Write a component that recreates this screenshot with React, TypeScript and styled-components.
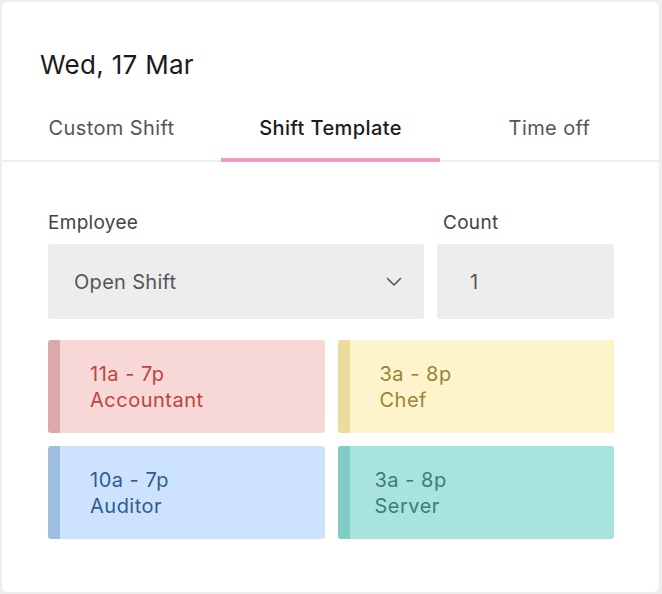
import React from 'react';
import styled, { createGlobalStyle } from 'styled-components';

const GlobalStyle = createGlobalStyle`
    html, body {
        margin: 0;
        padding: 0;
        background: #eeeeee;
    }
    body {
        font-family: Inter, "Noto Sans", "Liberation Sans", sans-serif;
    }
`;

/** ____________________________________________________    FRAME
 * */
const Panel = styled.div`
    box-sizing: border-box;
    margin: 2px 3px 0 2px;
    height: 590px;
    background: #ffffff;
    border-radius: 5px;
`;

const Title = styled.h1`
    margin: 0;
    padding: 47px 0 0 38px;
    font-size: 26px;
    line-height: 32px;
    font-weight: 400;
    letter-spacing: 0.3px;
    color: #1a1a1a;
`;

/** ____________________________________________________    TABS
 * */
const Tabs = styled.div`
    display: grid;
    grid-template-columns: repeat(3, 1fr);
    margin-top: 35px;
    border-bottom: 2px solid #eeeeee;
`;

const Tab = styled.div<{ $active?: boolean }>`
    text-align: center;
    font-size: 20px;
    line-height: 24px;
    letter-spacing: 0.4px;
    padding-bottom: 18px;
    margin-bottom: -2px;
    color: ${p => (p.$active ? '#1c1c1c' : '#555555')};
    font-weight: ${p => (p.$active ? 500 : 400)};
    border-bottom: 4px solid ${p => (p.$active ? '#f29ac4' : 'transparent')};
`;

/** ____________________________________________________    FORM
 * */
const Body = styled.div`
    padding: 49px 45px 0 46px;
`;

const FieldRow = styled.div`
    display: grid;
    grid-template-columns: 376px 1fr;
    column-gap: 13px;
`;

const Field = styled.div`
    display: flex;
    flex-direction: column;
    gap: 9px;
`;

const Label = styled.label<{ $indent?: number }>`
    padding-left: ${p => p.$indent ?? 0}px;
    font-size: 19px;
    line-height: 24px;
    letter-spacing: 0.3px;
    color: #444444;
`;

const InputBox = styled.div<{ $inset: number }>`
    display: flex;
    align-items: center;
    justify-content: space-between;
    height: 75px;
    box-sizing: border-box;
    padding: 0 22px 0 ${p => p.$inset}px;
    background: #ededed;
    border-radius: 3px;
    font-size: 20px;
    letter-spacing: 0.3px;
    color: #555555;
`;

/** ____________________________________________________    SHIFT TEMPLATES
 * */
const Templates = styled.div`
    display: grid;
    grid-template-columns: 1fr 1fr;
    gap: 13px;
    margin-top: 21px;
`;

type Tone = { bg: string; stripe: string; text: string };

const Card = styled.div<{ $tone: Tone; $inset: number }>`
    display: flex;
    flex-direction: column;
    justify-content: center;
    height: 93px;
    box-sizing: border-box;
    padding-left: ${p => p.$inset}px;
    background: ${p => p.$tone.bg};
    border-left: 12px solid ${p => p.$tone.stripe};
    border-radius: 3px;
    color: ${p => p.$tone.text};
    font-size: 20px;
    line-height: 26px;
    letter-spacing: 0.5px;
`;

const tones: Record<string, Tone> = {
    red: { bg: '#f8d7d7', stripe: '#dcaaa9', text: '#c0423f' },
    yellow: { bg: '#fef4cb', stripe: '#ecdb9f', text: '#9a8434' },
    blue: { bg: '#cde3fd', stripe: '#a0bde2', text: '#2f5b93' },
    teal: { bg: '#a8e3de', stripe: '#80cdc6', text: '#3a7e78' },
};

const shifts = [
    { time: '11a - 7p', role: 'Accountant', tone: tones.red, inset: 30 },
    { time: '3a - 8p', role: 'Chef', tone: tones.yellow, inset: 30 },
    { time: '10a - 7p', role: 'Auditor', tone: tones.blue, inset: 30 },
    { time: '3a - 8p', role: 'Server', tone: tones.teal, inset: 25 },
];

const Chevron = () => (
    <svg width="16" height="10" viewBox="0 0 16 10" fill="none">
        <path d="M1.5 1.5 L8 8 L14.5 1.5" stroke="#555" strokeWidth="1.6" strokeLinecap="round" strokeLinejoin="round"/>
    </svg>
);

export default function App() {
    return (
        <>
            <GlobalStyle/>
            <Panel>
                <Title>Wed, 17 Mar</Title>

                <Tabs>
                    <Tab>Custom Shift</Tab>
                    <Tab $active>Shift Template</Tab>
                    <Tab>Time off</Tab>
                </Tabs>

                <Body>
                    <FieldRow>
                        <Field>
                            <Label>Employee</Label>
                            <InputBox $inset={26}>
                                <span>Open Shift</span>
                                <Chevron/>
                            </InputBox>
                        </Field>
                        <Field>
                            <Label $indent={6}>Count</Label>
                            <InputBox $inset={33}>
                                <span>1</span>
                            </InputBox>
                        </Field>
                    </FieldRow>

                    <Templates>
                        {shifts.map(s => (
                            <Card key={s.role} $tone={s.tone} $inset={s.inset}>
                                <span>{s.time}</span>
                                <span>{s.role}</span>
                            </Card>
                        ))}
                    </Templates>
                </Body>
            </Panel>
        </>
    );
}
